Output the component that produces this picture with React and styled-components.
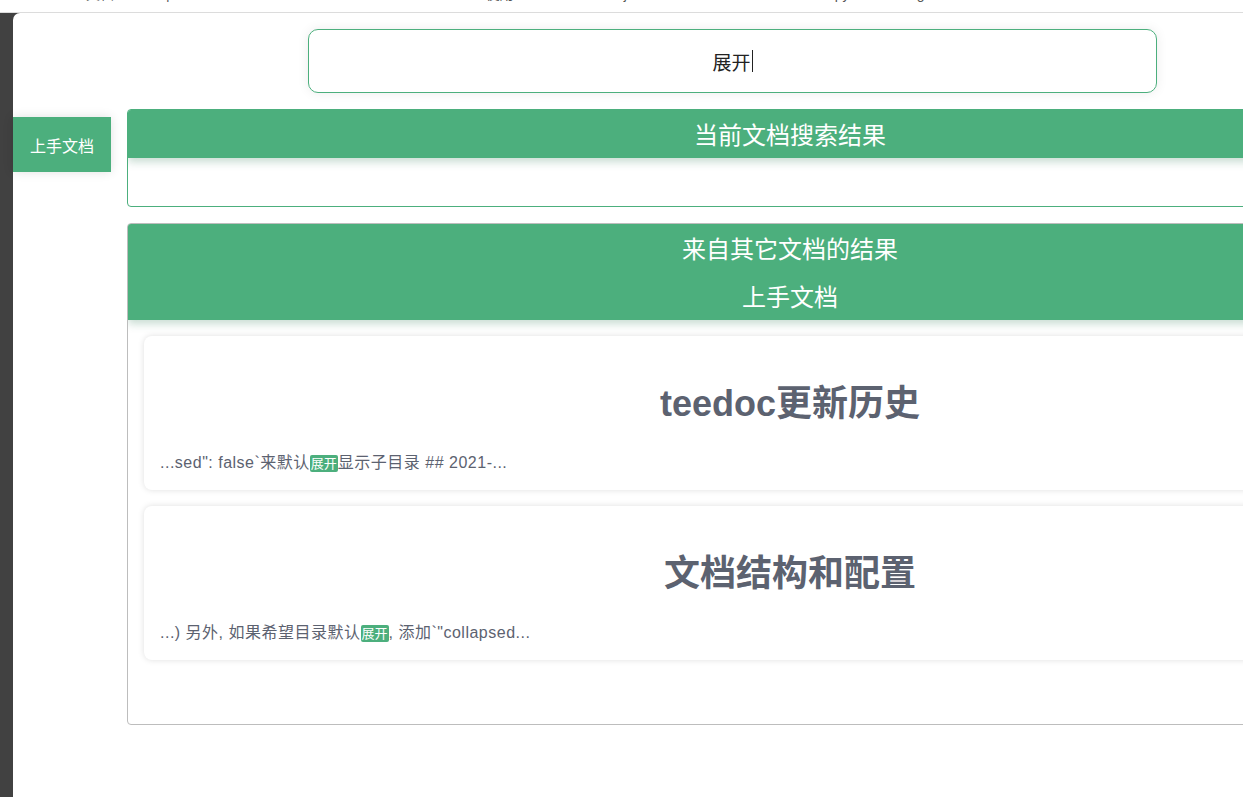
import React from "react"
import styled, { createGlobalStyle } from "styled-components"

const Green = "#4caf7d"
const Slate = "#5c6270"

const GlobalStyle = createGlobalStyle`
  html, body {
    margin: 0;
    padding: 0;
    height: 100%;
    overflow: hidden;
    background: #414141;
    font-family: "Liberation Sans", "Noto Sans CJK SC", sans-serif;
  }
  #root { height: 100%; }
`

const Page = styled.div`
  height: 100vh;
  display: flex;
  flex-direction: column;
  overflow: hidden;
`

const TopBar = styled.div`
  height: 12px;
  flex-shrink: 0;
  background: #fff;
  border-bottom: 1px solid #dcdcdc;
  overflow: hidden;
  display: flex;
`

const NavItem = styled.span`
  margin-left: ${p => p.$left}px;
  margin-top: -14px;
  font-size: 14px;
  line-height: 16px;
  color: #555;
  white-space: nowrap;
`

const Panel = styled.div`
  flex: 1;
  margin-left: 13px;
  width: 1500px;
  background: #fff;
  border-top-left-radius: 7px;
`

const SearchRow = styled.div`
  padding: 16px 0 0 295px;
`

const SearchBox = styled.div`
  width: 847px;
  height: 62px;
  border: 1px solid ${Green};
  border-radius: 10px;
  box-shadow: 0 0 12px rgba(0, 0, 0, 0.08);
  display: flex;
  align-items: center;
  justify-content: center;
  font-family: "Noto Sans CJK SC", sans-serif;
  font-size: 19px;
  color: #222;
`

const Caret = styled.span`
  display: inline-block;
  width: 1px;
  height: 22px;
  background: #222;
  margin-left: 1px;
`

const Body = styled.div`
  display: flex;
  gap: 16px;
  margin-top: 16px;
`

const Sidebar = styled.div`
  width: 98px;
  padding-top: 8px;
`

const DocTab = styled.div`
  height: 55px;
  background: ${Green};
  color: #fff;
  font-family: "Noto Sans CJK SC", sans-serif;
  font-size: 16px;
  display: flex;
  align-items: center;
  justify-content: center;
  box-shadow: 0 0 10px rgba(0, 0, 0, 0.12);
`

const Results = styled.div`
  width: 1326px;
  display: flex;
  flex-direction: column;
  gap: 16px;
`

const ResultBox = styled.div`
  border: 1px solid ${p => (p.$current ? Green : "#bdbdbd")};
  border-radius: 4px;
  overflow: hidden;
`

const BoxHeader = styled.div`
  background: ${Green};
  color: #fff;
  font-family: "Noto Sans CJK SC", sans-serif;
  font-size: 24px;
  text-align: center;
  box-shadow: 0 4px 8px rgba(40, 120, 80, 0.25);
  position: relative;
`

const HeaderLine = styled.div`
  line-height: 48px;
  height: 48px;
`

const BoxBody = styled.div`
  padding: ${p => (p.$empty ? "24px 16px" : "16px 16px 64px")};
  display: flex;
  flex-direction: column;
  gap: 16px;
`

const Card = styled.div`
  background: #fff;
  border-radius: 8px;
  box-shadow: 0 0 6px rgba(0, 0, 0, 0.13);
  padding: 16px 16px 14px;
  color: ${Slate};
`

const CardTitle = styled.h2`
  margin: 30px 0 26px;
  text-align: center;
  font-size: 36px;
  line-height: 43px;
  font-weight: bold;
  color: ${Slate};
  font-family: "Liberation Sans", "Noto Sans CJK SC", sans-serif;
`

const Summary = styled.div`
  font-size: 16px;
  line-height: 24px;
  letter-spacing: 0.5px;
`

const Hit = styled.span`
  background: ${Green};
  color: #fff;
  font-size: 13px;
  border-radius: 2px;
  padding: 1px 1px;
  letter-spacing: 0;
`

const hits = [
  { title: "teedoc更新历史", before: "...sed\": false`来默认", after: "显示子目录 ## 2021-..." },
  { title: "文档结构和配置", before: "...) 另外, 如果希望目录默认", after: ", 添加`\"collapsed..." },
]

const App = () => {
  return (
    <Page>
      <GlobalStyle />
      <TopBar>
        <NavItem $left={20}>teedoc</NavItem>
        <NavItem $left={24}>文档</NavItem>
        <NavItem $left={52}>|</NavItem>
        <NavItem $left={316}>使用</NavItem>
        <NavItem $left={110}>j</NavItem>
        <NavItem $left={208}>py</NavItem>
        <NavItem $left={50}>English</NavItem>
      </TopBar>
      <Panel>
        <SearchRow>
          <SearchBox>
            展开<Caret />
          </SearchBox>
        </SearchRow>
        <Body>
          <Sidebar>
            <DocTab>上手文档</DocTab>
          </Sidebar>
          <Results>
            <ResultBox $current>
              <BoxHeader>
                <HeaderLine>当前文档搜索结果</HeaderLine>
              </BoxHeader>
              <BoxBody $empty />
            </ResultBox>
            <ResultBox>
              <BoxHeader>
                <HeaderLine>来自其它文档的结果</HeaderLine>
                <HeaderLine>上手文档</HeaderLine>
              </BoxHeader>
              <BoxBody>
                {hits.map((hit, i) => (
                  <Card key={i}>
                    <CardTitle>{hit.title}</CardTitle>
                    <Summary>
                      {hit.before}
                      <Hit>展开</Hit>
                      {hit.after}
                    </Summary>
                  </Card>
                ))}
              </BoxBody>
            </ResultBox>
          </Results>
        </Body>
      </Panel>
    </Page>
  )
}

export default App
